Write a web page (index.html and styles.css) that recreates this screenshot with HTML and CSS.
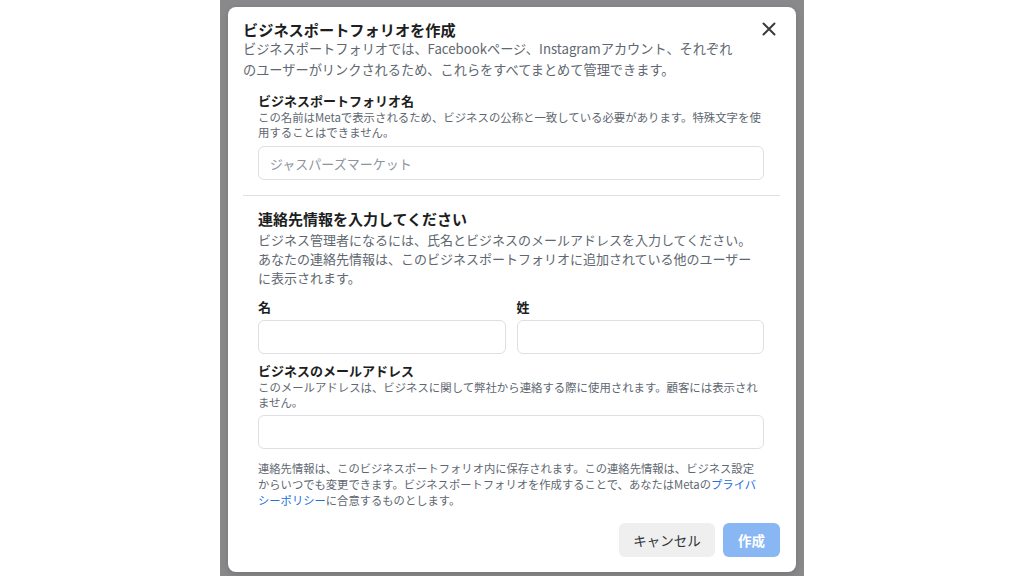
FILE: index.html
```html
<!DOCTYPE html>
<html lang="ja">
<head>
<meta charset="utf-8">
<title>ビジネスポートフォリオを作成</title>
<link rel="stylesheet" href="styles.css">
</head>
<body>
<div class="backdrop">
  <div class="modal">
    <div class="modal-head">
      <h1 class="title">ビジネスポートフォリオを作成</h1>
      <button class="close" aria-label="閉じる">
        <svg width="14" height="14" viewBox="0 0 14 14"><path d="M1.5 1.5 L12.5 12.5 M12.5 1.5 L1.5 12.5" stroke="#3a3b3c" stroke-width="2" stroke-linecap="round"/></svg>
      </button>
    </div>
    <p class="intro">ビジネスポートフォリオでは、Facebookページ、Instagramアカウント、それぞれ<br>のユーザーがリンクされるため、これらをすべてまとめて管理できます。</p>

    <div class="section">
      <div class="label first-label">ビジネスポートフォリオ名</div>
      <div class="help">この名前はMetaで表示されるため、ビジネスの公称と一致している必要があります。特殊文字を使<br>用することはできません。</div>
      <div class="input placeholder first-input">ジャスパーズマーケット</div>
    </div>

    <div class="divider"></div>

    <div class="section">
      <h2 class="subtitle">連絡先情報を入力してください</h2>
      <p class="subdesc">ビジネス管理者になるには、氏名とビジネスのメールアドレスを入力してください。<br>あなたの連絡先情報は、このビジネスポートフォリオに追加されている他のユーザー<br>に表示されます。</p>
      <div class="name-row">
        <div class="field">
          <div class="label small">名</div>
          <div class="input"></div>
        </div>
        <div class="field">
          <div class="label small">姓</div>
          <div class="input"></div>
        </div>
      </div>
      <div class="label email-label">ビジネスのメールアドレス</div>
      <div class="help">このメールアドレスは、ビジネスに関して弊社から連絡する際に使用されます。顧客には表示され<br>ません。</div>
      <div class="input"></div>
      <p class="note">連絡先情報は、このビジネスポートフォリオ内に保存されます。この連絡先情報は、ビジネス設定<br>からいつでも変更できます。ビジネスポートフォリオを作成することで、あなたはMetaの<a class="link" href="#">プライバ<br>シーポリシー</a>に合意するものとします。</p>
    </div>

    <div class="actions">
      <button class="btn btn-cancel">キャンセル</button>
      <button class="btn btn-create">作成</button>
    </div>
  </div>
</div>
</body>
</html>
```

FILE: styles.css
```css
* { box-sizing: border-box; }

html, body {
  margin: 0;
  padding: 0;
  background: #ffffff;
  width: 1024px;
  height: 576px;
  overflow: hidden;
  font-family: "Noto Sans CJK JP", "Noto Sans", "Liberation Sans", sans-serif;
  color: #1c1e21;
}

.backdrop {
  margin-left: 220px;
  width: 584px;
  height: 576px;
  padding: 7px 8px 4px 8px;
  background: #89898b;
}

.modal {
  background: #ffffff;
  border-radius: 8px;
  height: 565px;
  padding: 13px 16px 15px 15px;
  box-shadow: 0 2px 6px rgba(0,0,0,0.15);
}

.modal-head {
  display: flex;
  justify-content: space-between;
  align-items: center;
}

.title {
  margin: 0;
  font-size: 15.2px;
  line-height: 18px;
  font-weight: 700;
  color: #1c1e21;
}

.close {
  border: 0;
  background: transparent;
  padding: 0;
  width: 18px;
  height: 18px;
  display: flex;
  align-items: center;
  justify-content: center;
  margin-right: 2px;
}

.intro {
  margin: 0;
  font-size: 13.2px;
  line-height: 21px;
  color: #606770;
  white-space: nowrap;
}

.section {
  padding: 0 16px 0 15px;
}

.label {
  margin-top: 12px;
  font-size: 13px;
  line-height: 18px;
  font-weight: 700;
  color: #1c1e21;
}

.first-label {
  margin-top: 12px;
}

.help {
  font-size: 11.4px;
  line-height: 15px;
  color: #606770;
  white-space: nowrap;
}

.input {
  margin-top: 5px;
  height: 34px;
  border: 1px solid #dddfe2;
  border-radius: 6px;
  background: #ffffff;
  padding: 0 11px;
  display: flex;
  align-items: center;
}

.first-input {
  margin-top: 6px;
}

.placeholder {
  font-size: 13px;
  color: #8d949e;
}

.divider {
  margin: 15px 0 0 0;
  height: 1px;
  background: #dddfe2;
}

.subtitle {
  margin: 13px 0 0 0;
  font-size: 15px;
  line-height: 20px;
  font-weight: 700;
  color: #1c1e21;
}

.subdesc {
  margin: 1px 0 0 0;
  font-size: 13px;
  line-height: 19px;
  color: #606770;
  white-space: nowrap;
}

.name-row {
  display: grid;
  grid-template-columns: 1fr 1fr;
  column-gap: 11px;
}

.field .label.small {
  margin-top: 11px;
}

.field .input {
  margin-top: 4px;
}

.email-label {
  margin-top: 8px;
}

.note {
  margin: 11px 0 0 0;
  font-size: 11.3px;
  line-height: 16px;
  color: #606770;
  white-space: nowrap;
}

.link {
  color: #216fdb;
  text-decoration: none;
}

.actions {
  margin-top: 15px;
  display: flex;
  justify-content: flex-end;
  gap: 8px;
}

.btn {
  height: 34px;
  border: 0;
  border-radius: 6px;
  font-family: inherit;
  font-size: 13.5px;
  padding: 0 14px;
}

.btn-cancel {
  width: 96px;
  background: #efefef;
  color: #303338;
}

.btn-create {
  width: 57px;
  background: #89b7f3;
  color: #ffffff;
  font-weight: 700;
}
```
